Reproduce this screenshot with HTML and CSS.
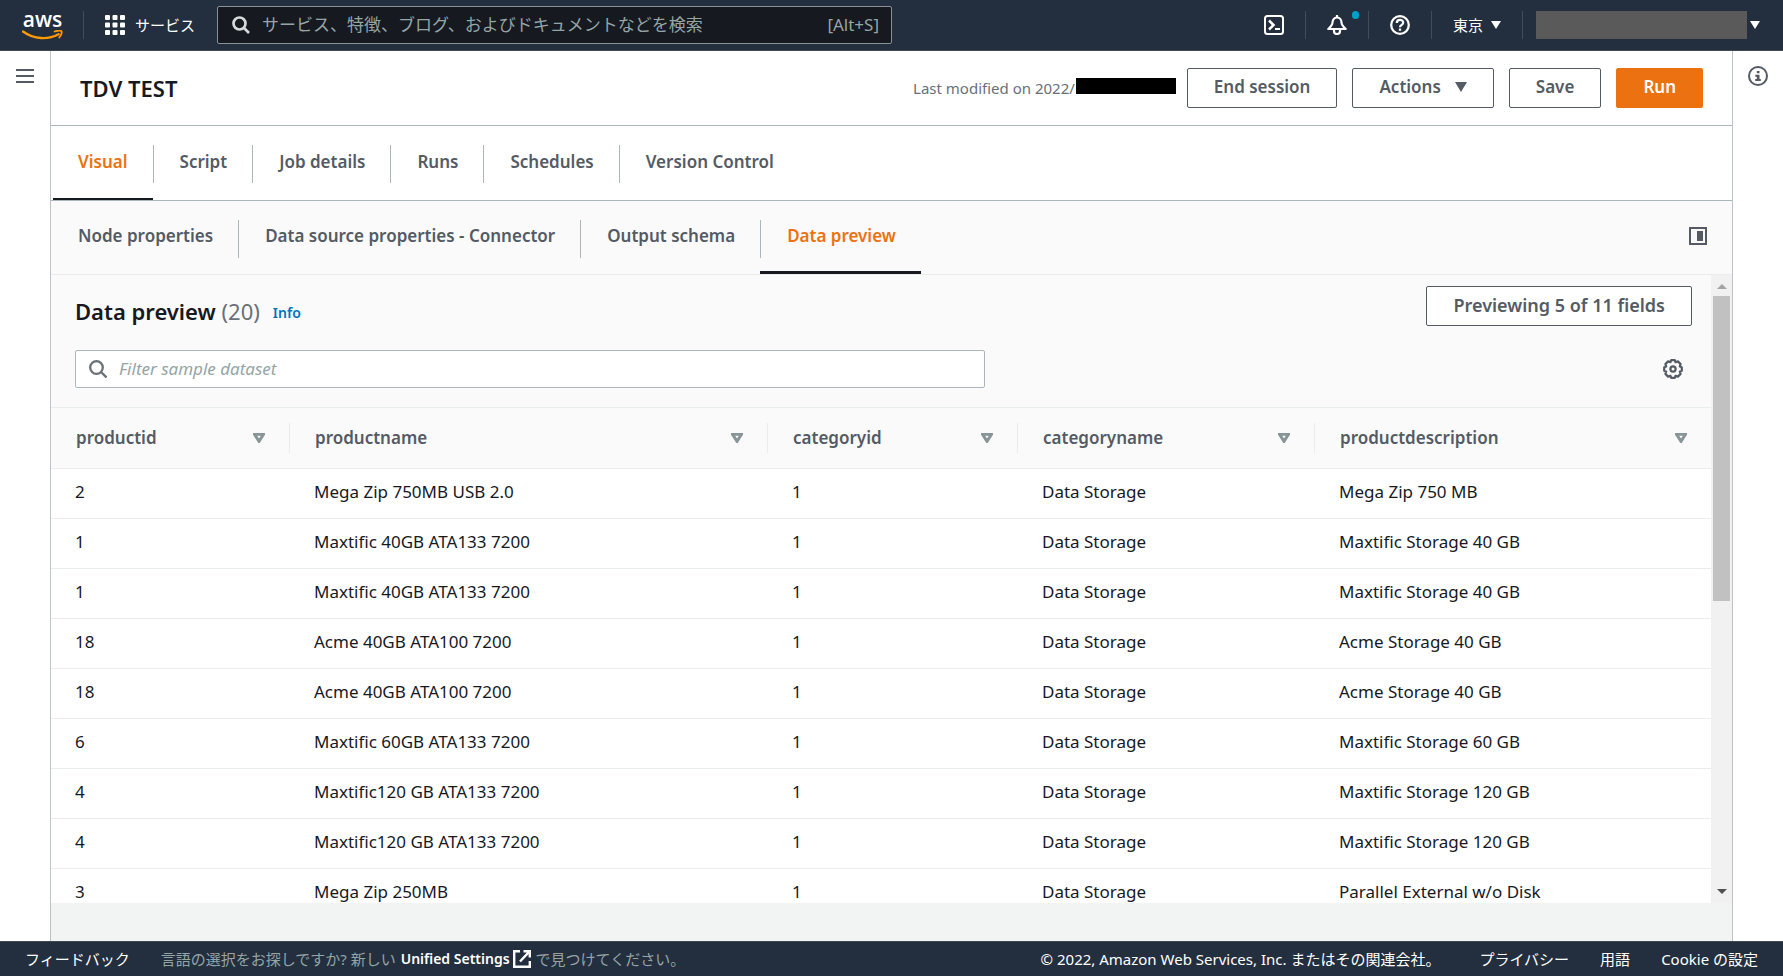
FILE: index.html
```html
<!DOCTYPE html>
<html lang="ja">
<head>
    <meta charset="utf-8">
    <title>TDV TEST - AWS Glue Studio</title>
    <link rel="stylesheet" href="styles.css">
</head>
<body>
    <header class="navbar">
        <a href="#" class="logo" aria-label="aws">
            <span class="logo-text">aws</span>
            <svg class="logo-smile" width="41" height="11" viewBox="0 0 41 11">
                <path d="M1 1.500C12 9.500 26 10 36.500 4.200" fill="none" stroke="#f90" stroke-width="2.400" stroke-linecap="round"/>
                <path d="M32.500 1.500C36 .5 39 .5 39.500 1.300C40 2.500 39 5.500 37.300 7.500" fill="none" stroke="#f90" stroke-width="1.800" stroke-linecap="round"/>
            </svg>
        </a>
        <span class="nav-line"></span>
        <button type="button" class="services">
            <svg width="20" height="20" viewBox="0 0 20 20" fill="#fff">
                <rect width="5" height="5" rx="1"/><rect x="7.500" width="5" height="5" rx="1"/><rect x="15" width="5" height="5" rx="1"/>
                <rect y="7.500" width="5" height="5" rx="1"/><rect x="7.500" y="7.500" width="5" height="5" rx="1"/><rect x="15" y="7.500" width="5" height="5" rx="1"/>
                <rect y="15" width="5" height="5" rx="1"/><rect x="7.500" y="15" width="5" height="5" rx="1"/><rect x="15" y="15" width="5" height="5" rx="1"/>
            </svg>
            サービス
        </button>
        <label class="nav-search">
            <svg width="18" height="18" viewBox="0 0 18 18" fill="none" stroke="#d5dbdb" stroke-width="2.700">
                <circle cx="7.500" cy="7.500" r="6"/><path d="M12 12l5 5"/>
            </svg>
            <input type="text" aria-label="検索" placeholder="サービス、特徴、ブログ、およびドキュメントなどを検索">
            <span>[Alt+S]</span>
        </label>
        <div class="nav-right">
            <button type="button" class="nav-icon" aria-label="CloudShell">
                <svg width="20" height="20" viewBox="0 0 20 20" fill="none" stroke="#fff" stroke-width="2">
                    <rect x="1" y="1" width="18" height="18" rx="2.500"/><path d="M5 5.500l4.500 4.500L5 14.500" stroke-width="2.600"/><path d="M11 14h5"/>
                </svg>
            </button>
            <span class="nav-line"></span>
            <button type="button" class="nav-icon" aria-label="通知">
                <svg width="20" height="20" viewBox="0 0 20 20" fill="none" stroke="#fff" stroke-width="2.200" stroke-linejoin="round">
                    <path d="M10 0v3M10 2.500C7 2.500 5.500 5 5.500 7.500C5.500 10 4 11.500 1.300 14H18.700C16 11.500 14.500 10 14.500 7.500C14.500 5 13 2.500 10 2.500z"/>
                    <path d="M7 14.500V16a3 3 0 0 0 6 0V14.500"/>
                </svg>
                <span class="dot"></span>
            </button>
            <span class="nav-line"></span>
            <button type="button" class="nav-icon" aria-label="ヘルプ">
                <svg width="20" height="20" viewBox="0 0 20 20" fill="none" stroke="#fff" stroke-width="2.300">
                    <circle cx="10" cy="10" r="8.800"/><path d="M6.800 8C6.800 3.800 13.200 3.800 13.200 7.800C13.200 10 10 9.800 10 12.300"/><path d="M10 13.500v2.300"/>
                </svg>
            </button>
            <span class="nav-line"></span>
            <button type="button" class="region">東京 <span class="caret"></span></button>
            <span class="nav-line"></span>
            <button type="button" class="account" aria-label="アカウント"><span class="account-name"></span><span class="caret"></span></button>
        </div>
    </header>

    <div class="layout">
        <aside class="rail">
            <button type="button" class="icon-button" aria-label="メニュー">
                <svg width="18" height="16" viewBox="0 0 18 16" stroke="#545b64" stroke-width="2"><path d="M0 2h18M0 8h18M0 14h18"/></svg>
            </button>
        </aside>

        <main class="content">
            <div class="title-bar">
                <h1>TDV TEST</h1>
                <div class="modified">Last modified on 2022/<span class="redacted"></span></div>
                <div class="actions">
                    <button type="button" class="button">End session</button>
                    <button type="button" class="button">Actions <span class="caret caret-big"></span></button>
                    <button type="button" class="button">Save</button>
                    <button type="button" class="button primary">Run</button>
                </div>
            </div>

            <nav class="tabs">
                <a href="#" class="active">Visual</a>
                <a href="#">Script</a>
                <a href="#">Job details</a>
                <a href="#">Runs</a>
                <a href="#">Schedules</a>
                <a href="#">Version Control</a>
            </nav>

            <nav class="tabs sub-tabs">
                <a href="#">Node properties</a>
                <a href="#">Data source properties - Connector</a>
                <a href="#">Output schema</a>
                <a href="#" class="active">Data preview</a>
                <button type="button" class="icon-button split" aria-label="Split view">
                    <svg width="18" height="18" viewBox="0 0 18 18"><rect x="1" y="1" width="16" height="16" fill="none" stroke="#545b64" stroke-width="2"/><rect x="8" y="4" width="6" height="10" fill="#545b64"/></svg>
                </button>
            </nav>

            <div class="panel">
                <div class="panel-body">
                    <div class="toolbar">
                        <div class="toolbar-row">
                            <h2>Data preview <span>(20)</span></h2>
                            <a href="#" class="info">Info</a>
                            <button type="button" class="button">Previewing 5 of 11 fields</button>
                        </div>
                        <div class="toolbar-row">
                            <label class="filter">
                                <svg width="18" height="18" viewBox="0 0 18 18" fill="none" stroke="#687078" stroke-width="2.300">
                                    <circle cx="7.500" cy="7.500" r="6.300"/><path d="M12 12l5.500 5.500"/>
                                </svg>
                                <input type="text" aria-label="Filter sample dataset" placeholder="Filter sample dataset">
                            </label>
                            <button type="button" class="icon-button gear" aria-label="Settings">
                                <svg width="20" height="20" viewBox="-10 -10 20 20" fill="none" stroke="#545b64" stroke-width="2.200" stroke-linejoin="round">
                                    <path d="M-1.800-8.800H1.800L2.500-6.800L4.900-7.600L7.600-4.900L6.800-2.500L8.800-1.800V1.800L6.800 2.500L7.600 4.900L4.900 7.600L2.500 6.800L1.800 8.800H-1.800L-2.500 6.800L-4.900 7.600L-7.600 4.900L-6.800 2.500L-8.800 1.800V-1.800L-6.800-2.500L-7.600-4.900L-4.900-7.600L-2.500-6.800z"/>
                                    <circle r="2.600"/>
                                </svg>
                            </button>
                        </div>
                    </div>
                    <table>
                        <colgroup>
                            <col class="col-id"><col class="col-name"><col class="col-category"><col class="col-category-name"><col>
                        </colgroup>
                        <thead>
                            <tr>
                                <th><div>productid <svg class="sort" width="12" height="10" viewBox="0 0 12 10"><path d="M1.500 1.300h9L6 8.300z"/></svg></div></th>
                                <th><div>productname <svg class="sort" width="12" height="10" viewBox="0 0 12 10"><path d="M1.500 1.300h9L6 8.300z"/></svg></div></th>
                                <th><div>categoryid <svg class="sort" width="12" height="10" viewBox="0 0 12 10"><path d="M1.500 1.300h9L6 8.300z"/></svg></div></th>
                                <th><div>categoryname <svg class="sort" width="12" height="10" viewBox="0 0 12 10"><path d="M1.500 1.300h9L6 8.300z"/></svg></div></th>
                                <th><div>productdescription <svg class="sort" width="12" height="10" viewBox="0 0 12 10"><path d="M1.500 1.300h9L6 8.300z"/></svg></div></th>
                            </tr>
                        </thead>
                        <tbody>
                            <tr><td>2</td><td>Mega Zip 750MB USB 2.0</td><td>1</td><td>Data Storage</td><td>Mega Zip 750 MB</td></tr>
                            <tr><td>1</td><td>Maxtific 40GB ATA133 7200</td><td>1</td><td>Data Storage</td><td>Maxtific Storage 40 GB</td></tr>
                            <tr><td>1</td><td>Maxtific 40GB ATA133 7200</td><td>1</td><td>Data Storage</td><td>Maxtific Storage 40 GB</td></tr>
                            <tr><td>18</td><td>Acme 40GB ATA100 7200</td><td>1</td><td>Data Storage</td><td>Acme Storage 40 GB</td></tr>
                            <tr><td>18</td><td>Acme 40GB ATA100 7200</td><td>1</td><td>Data Storage</td><td>Acme Storage 40 GB</td></tr>
                            <tr><td>6</td><td>Maxtific 60GB ATA133 7200</td><td>1</td><td>Data Storage</td><td>Maxtific Storage 60 GB</td></tr>
                            <tr><td>4</td><td>Maxtific120 GB ATA133 7200</td><td>1</td><td>Data Storage</td><td>Maxtific Storage 120 GB</td></tr>
                            <tr><td>4</td><td>Maxtific120 GB ATA133 7200</td><td>1</td><td>Data Storage</td><td>Maxtific Storage 120 GB</td></tr>
                            <tr><td>3</td><td>Mega Zip 250MB</td><td>1</td><td>Data Storage</td><td>Parallel External w/o Disk</td></tr>
                        </tbody>
                    </table>
                </div>
                <div class="scrollbar">
                    <span class="arrow-up"></span>
                    <div class="track"><div class="thumb"></div></div>
                    <span class="arrow-down"></span>
                </div>
            </div>
        </main>

        <aside class="rail rail-right">
            <button type="button" class="icon-button" aria-label="情報">
                <svg width="20" height="20" viewBox="0 0 20 20">
                    <circle cx="10" cy="10" r="9" fill="none" stroke="#545b64" stroke-width="2"/>
                    <path d="M8.800 5h2.700v2.300H8.800zM7.300 8.700h4.200v4.300h1.300v2H7.200v-2h1.600v-2.300H7.300z" fill="#545b64"/>
                </svg>
            </button>
        </aside>
    </div>

    <footer class="footer">
        <a href="#">フィードバック</a>
        <p class="language">言語の選択をお探しですか? 新しい <a href="#">Unified Settings<svg width="18" height="18" viewBox="0 0 18 18" fill="none" stroke="#fff" stroke-width="2.400"><path d="M7 1.200H1.200v15.600h15.600V11M10.500 1.200h6.300v6.300M16.800 1.200L7 11.500"/></svg></a> で見つけてください。</p>
        <span class="copyright">© 2022, Amazon Web Services, Inc. またはその関連会社。</span>
        <a href="#">プライバシー</a>
        <a href="#">用語</a>
        <a href="#">Cookie の設定</a>
    </footer>
</body>
</html>
```

FILE: styles.css
```css
* {
    box-sizing: border-box;
}
body {
    margin: 0;
    height: 100vh;
    display: flex;
    flex-direction: column;
    overflow: hidden;
    font-family: "Noto Sans", "Noto Sans CJK JP", sans-serif;
    font-size: 17px;
    line-height: 24px;
    color: #16191f;
    background: #fff;
}
button, input {
    font: inherit;
    color: inherit;
    background: none;
    border: 0;
    padding: 0;
    margin: 0;
}
button {
    cursor: pointer;
}
a {
    color: inherit;
    text-decoration: none;
}
svg {
    display: block;
    flex: none;
}

/* top bar */
.navbar {
    display: flex;
    align-items: center;
    flex: none;
    height: 51px;
    padding: 0 23px 0 22px;
    background: #232f3e;
    border-bottom: 1px solid #414750;
    color: #fff;
    font-size: 15px;
}
.logo {
    width: 41px;
    text-align: center;
}
.logo-text {
    display: block;
    font: 600 21px/18px "Open Sans", sans-serif;
    margin-bottom: 2px;
}
.nav-line {
    width: 1px;
    height: 28px;
    background: #414d5c;
}
.logo + .nav-line {
    margin: 0 21px 0 20px;
}
.services {
    display: flex;
    align-items: center;
    gap: 10px;
}
.nav-search {
    display: flex;
    align-items: center;
    width: 675px;
    height: 38px;
    margin-left: 22px;
    padding: 0 12px 0 14px;
    gap: 12px;
    background: #16191f;
    border: 1px solid #879196;
    border-radius: 2px;
    color: #95a5a6;
    font-size: 17px;
}
.nav-search input {
    flex: 1;
    min-width: 0;
    outline: 0;
}
input::placeholder {
    color: #95a5a6;
    opacity: 1;
}
.nav-right {
    display: flex;
    align-items: center;
    gap: 21px;
    margin-left: auto;
}
.nav-icon {
    position: relative;
}
.dot {
    position: absolute;
    top: -4px;
    right: -12px;
    width: 7px;
    height: 8px;
    border-radius: 4px;
    background: #00a1c9;
}
.region, .account {
    display: flex;
    align-items: center;
    gap: 8px;
}
.account {
    gap: 3px;
    margin-left: -8px;
}
.account-name {
    width: 211px;
    height: 28px;
    background: #5a5a5a;
}
.caret {
    border: 5px solid transparent;
    border-top: 8px solid currentColor;
    border-bottom: 0;
}
.caret-big {
    border-width: 10px 6px 0;
}

/* page frame */
.layout {
    display: flex;
    flex: 1;
    min-height: 0;
}
.icon-button {
    display: block;
}
.rail {
    width: 50px;
    flex: none;
    padding: 17px 16px;
}
.rail-right {
    padding: 15px;
}
.content {
    flex: 1;
    min-width: 0;
    display: flex;
    flex-direction: column;
    padding-bottom: 38px;
    background: #f2f3f3;
    border: solid #bcc5c5;
    border-width: 0 1px;
}
.title-bar {
    display: flex;
    align-items: center;
    flex: none;
    height: 75px;
    padding: 0 29px;
    background: #fff;
    border-bottom: 1px solid #aab7b8;
}
h1, h2 {
    margin: 0;
    font-size: 22px;
    font-weight: 600;
}
.modified {
    display: flex;
    align-items: center;
    gap: 1px;
    margin-left: auto;
    color: #687078;
    font-size: 15px;
}
.redacted {
    width: 100px;
    height: 16px;
    margin-bottom: 4px;
    background: #000;
}
.actions {
    display: flex;
    gap: 15px;
    margin-left: 11px;
}
.button {
    display: flex;
    align-items: center;
    gap: 14px;
    height: 40px;
    padding: 0 26px 2px;
    background: #fff;
    border: 1px solid #545b64;
    border-radius: 2px;
    color: #545b64;
    font-weight: 600;
    white-space: nowrap;
}
.primary {
    background: #ec7211;
    border-color: #ec7211;
    color: #fff;
}

/* tabs */
.tabs {
    display: flex;
    flex: none;
    height: 75px;
    padding-left: 2px;
    background: #fff;
    border-bottom: 1px solid #aab7b8;
}
.tabs a {
    position: relative;
    display: flex;
    align-items: center;
    padding: 0 25px 0 27px;
    border-bottom: 2px solid transparent;
    color: #545b64;
    font-weight: 600;
}
.tabs a:first-child {
    padding-left: 25px;
}
.tabs a + a::before {
    content: "";
    position: absolute;
    left: 0;
    top: 19px;
    width: 1px;
    height: 38px;
    background: #aab7b8;
}
.tabs .active {
    color: #ec7211;
    border-bottom-color: #16191f;
}
.sub-tabs {
    height: 74px;
    background: #fafafa;
    border-color: #eaeded;
}
.sub-tabs a {
    border-bottom-width: 3px;
}
.split {
    margin: 0 25px 4px auto;
}

/* data preview */
.panel {
    display: flex;
    flex: 1;
    min-height: 0;
    background: #fff;
}
.panel-body {
    flex: 1;
    min-width: 0;
    overflow: hidden;
}
.toolbar {
    display: flex;
    flex-direction: column;
    gap: 24px;
    padding: 11px 19px 19px 24px;
    background: #fafafa;
    border-bottom: 1px solid #eaeded;
}
.toolbar-row {
    display: flex;
    align-items: center;
}
.toolbar h2 {
    margin-top: 10px;
}
.toolbar h2 span {
    color: #687078;
    font-weight: 400;
}
.info {
    margin: 14px 0 0 13px;
    color: #0073bb;
    font-size: 14px;
    font-weight: 600;
}
.toolbar .button {
    margin-left: auto;
    font-size: 18px;
}
.filter {
    display: flex;
    align-items: center;
    flex: 1;
    gap: 12px;
    max-width: 910px;
    height: 38px;
    padding: 0 13px;
    background: #fff;
    border: 1px solid #aab7b8;
    border-radius: 2px;
}
.filter input {
    flex: 1;
    font-style: italic;
    outline: 0;
}
.gear {
    margin: 0 9px 0 auto;
}
table {
    width: 100%;
    table-layout: fixed;
    border-collapse: collapse;
}
.col-id {
    width: 239px;
}
.col-name {
    width: 478px;
}
.col-category {
    width: 250px;
}
.col-category-name {
    width: 297px;
}
th {
    height: 60px;
    padding: 0;
    background: #fafafa;
    border-bottom: 1px solid #eaeded;
    color: #545b64;
    font-weight: 600;
    text-align: left;
}
th div {
    display: flex;
    align-items: center;
    justify-content: space-between;
    height: 30px;
    padding: 0 24px 0 25px;
    border-right: 1px solid #eaeded;
}
th:last-child div {
    border-right: 0;
}
.sort {
    fill: none;
    stroke: #879596;
    stroke-width: 3;
}
td {
    height: 50px;
    padding: 0 24px 2px;
    border-bottom: 1px solid #eaeded;
    line-height: 18px;
    white-space: nowrap;
}
.scrollbar {
    display: flex;
    flex-direction: column;
    align-items: center;
    flex: none;
    width: 21px;
    padding: 9px 1px;
    background: #f1f1f1;
}
.track {
    flex: 1;
    width: 17px;
    margin: 7px 0;
}
.thumb {
    height: 52%;
    background: #c1c1c1;
}
.arrow-up, .arrow-down {
    border: 5px solid transparent;
    border-top: 0;
    border-bottom-color: #a3a3a3;
}
.arrow-down {
    border-top: 5px solid #505050;
    border-bottom: 0;
}

/* bottom bar */
.footer {
    display: flex;
    align-items: center;
    flex: none;
    gap: 31px;
    height: 35px;
    padding: 0 25px;
    background: #232f3e;
    border-top: 1px solid #414750;
    color: #fff;
    font-size: 15px;
    white-space: nowrap;
}
.language {
    display: flex;
    align-items: center;
    gap: 5px;
    margin: 0;
    color: #95a5a6;
}
.language a {
    display: flex;
    align-items: center;
    gap: 3px;
    color: #fff;
    font-size: 14px;
    font-weight: 600;
}
.copyright {
    margin: 0 8px 0 auto;
}
```
